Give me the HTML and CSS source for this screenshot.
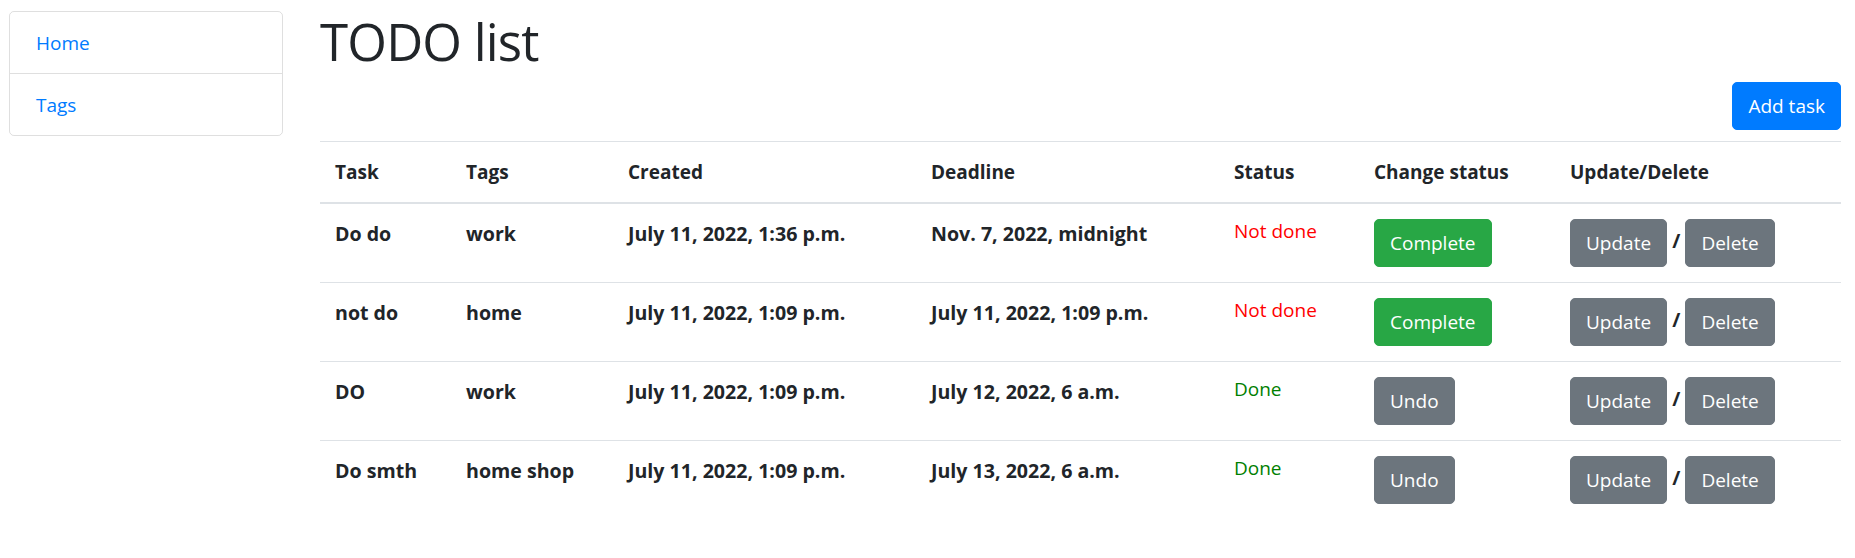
FILE: index.html
```html
<!DOCTYPE html>
<html lang="en">
<head>
<meta charset="utf-8">
<title>TODO list</title>
<link rel="stylesheet" href="styles.css">
</head>
<body>
<div class="layout">
  <aside class="sidebar">
    <ul class="list-group">
      <li class="list-item"><a href="#">Home</a></li>
      <li class="list-item"><a href="#">Tags</a></li>
    </ul>
  </aside>
  <main class="main">
    <h1 class="title">TODO list</h1>
    <div class="toolbar">
      <a class="btn btn-primary" href="#">Add task</a>
    </div>
    <table class="table">
      <thead>
        <tr>
          <th class="c-task">Task</th>
          <th class="c-tags">Tags</th>
          <th class="c-created">Created</th>
          <th class="c-deadline">Deadline</th>
          <th class="c-status">Status</th>
          <th class="c-change">Change status</th>
          <th class="c-actions">Update/Delete</th>
        </tr>
      </thead>
      <tbody>
        <tr>
          <td class="strong">Do do</td>
          <td class="strong">work</td>
          <td class="strong">July 11, 2022, 1:36 p.m.</td>
          <td class="strong">Nov. 7, 2022, midnight</td>
          <td class="status not-done">Not done</td>
          <td><a class="btn btn-success" href="#">Complete</a></td>
          <td class="strong"><a class="btn btn-secondary" href="#">Update</a> / <a class="btn btn-secondary" href="#">Delete</a></td>
        </tr>
        <tr>
          <td class="strong">not do</td>
          <td class="strong">home</td>
          <td class="strong">July 11, 2022, 1:09 p.m.</td>
          <td class="strong">July 11, 2022, 1:09 p.m.</td>
          <td class="status not-done">Not done</td>
          <td><a class="btn btn-success" href="#">Complete</a></td>
          <td class="strong"><a class="btn btn-secondary" href="#">Update</a> / <a class="btn btn-secondary" href="#">Delete</a></td>
        </tr>
        <tr>
          <td class="strong">DO</td>
          <td class="strong">work</td>
          <td class="strong">July 11, 2022, 1:09 p.m.</td>
          <td class="strong">July 12, 2022, 6 a.m.</td>
          <td class="status done">Done</td>
          <td><a class="btn btn-secondary" href="#">Undo</a></td>
          <td class="strong"><a class="btn btn-secondary" href="#">Update</a> / <a class="btn btn-secondary" href="#">Delete</a></td>
        </tr>
        <tr>
          <td class="strong">Do smth</td>
          <td class="strong">home shop</td>
          <td class="strong">July 11, 2022, 1:09 p.m.</td>
          <td class="strong">July 13, 2022, 6 a.m.</td>
          <td class="status done">Done</td>
          <td><a class="btn btn-secondary" href="#">Undo</a></td>
          <td class="strong"><a class="btn btn-secondary" href="#">Update</a> / <a class="btn btn-secondary" href="#">Delete</a></td>
        </tr>
      </tbody>
    </table>
  </main>
</div>
</body>
</html>
```
FILE: styles.css
```css
* { box-sizing: border-box; }

html, body {
  margin: 0;
  padding: 0;
  background: #fff;
}

body {
  font-family: "Open Sans", "Noto Sans", "Liberation Sans", sans-serif;
  font-size: 19px;
  line-height: 30px;
  color: #212529;
}

.layout {
  display: flex;
  align-items: flex-start;
  padding: 0 14px 0 9px;
}

.sidebar {
  width: 274px;
  flex: 0 0 274px;
  margin-top: 11px;
}

.list-group {
  list-style: none;
  margin: 0;
  padding: 0;
  border: 1px solid rgba(0, 0, 0, 0.125);
  border-radius: 5px;
}

.list-item {
  padding: 16px 25px 15px 26px;
}

.list-item + .list-item {
  border-top: 1px solid rgba(0, 0, 0, 0.125);
}

.list-item a {
  color: #007bff;
  text-decoration: none;
}

.main {
  flex: 1 1 auto;
  margin-left: 37px;
  padding-top: 11px;
}

.title {
  margin: 0 0 11px 0;
  font-size: 51px;
  line-height: 60px;
  font-weight: 500;
  letter-spacing: -0.8px;
}

.toolbar {
  display: flex;
  justify-content: flex-end;
  margin-bottom: 11px;
}

.btn {
  display: inline-block;
  padding: 8px 15px 8px;
  border: 1px solid transparent;
  border-radius: 5px;
  color: #fff;
  text-decoration: none;
  font-weight: 400;
  font-size: 19px;
  line-height: 30px;
  vertical-align: middle;
}

.btn-primary { background: #007bff; border-color: #007bff; }
.btn-success { background: #28a745; border-color: #28a745; }
.btn-secondary { background: #6c757d; border-color: #6c757d; }

.table {
  width: 100%;
  border-collapse: collapse;
}

.table th,
.table td {
  padding: 15px 15px;
  text-align: left;
  vertical-align: top;
  border-top: 1px solid #dee2e6;
}

.table th {
  font-weight: 700;
}

.table thead th {
  border-bottom: 2px solid #dee2e6;
}

.table td.strong {
  font-weight: 700;
  font-size: 19.6px;
}

.table td.status {
  font-weight: 400;
  padding-top: 12px;
}
.not-done { color: #ff0000; }
.done { color: #008000; }

.c-task { width: 131px; }
.c-tags { width: 162px; }
.c-created { width: 303px; }
.c-deadline { width: 303px; }
.c-status { width: 140px; }
.c-change { width: 196px; }
```
